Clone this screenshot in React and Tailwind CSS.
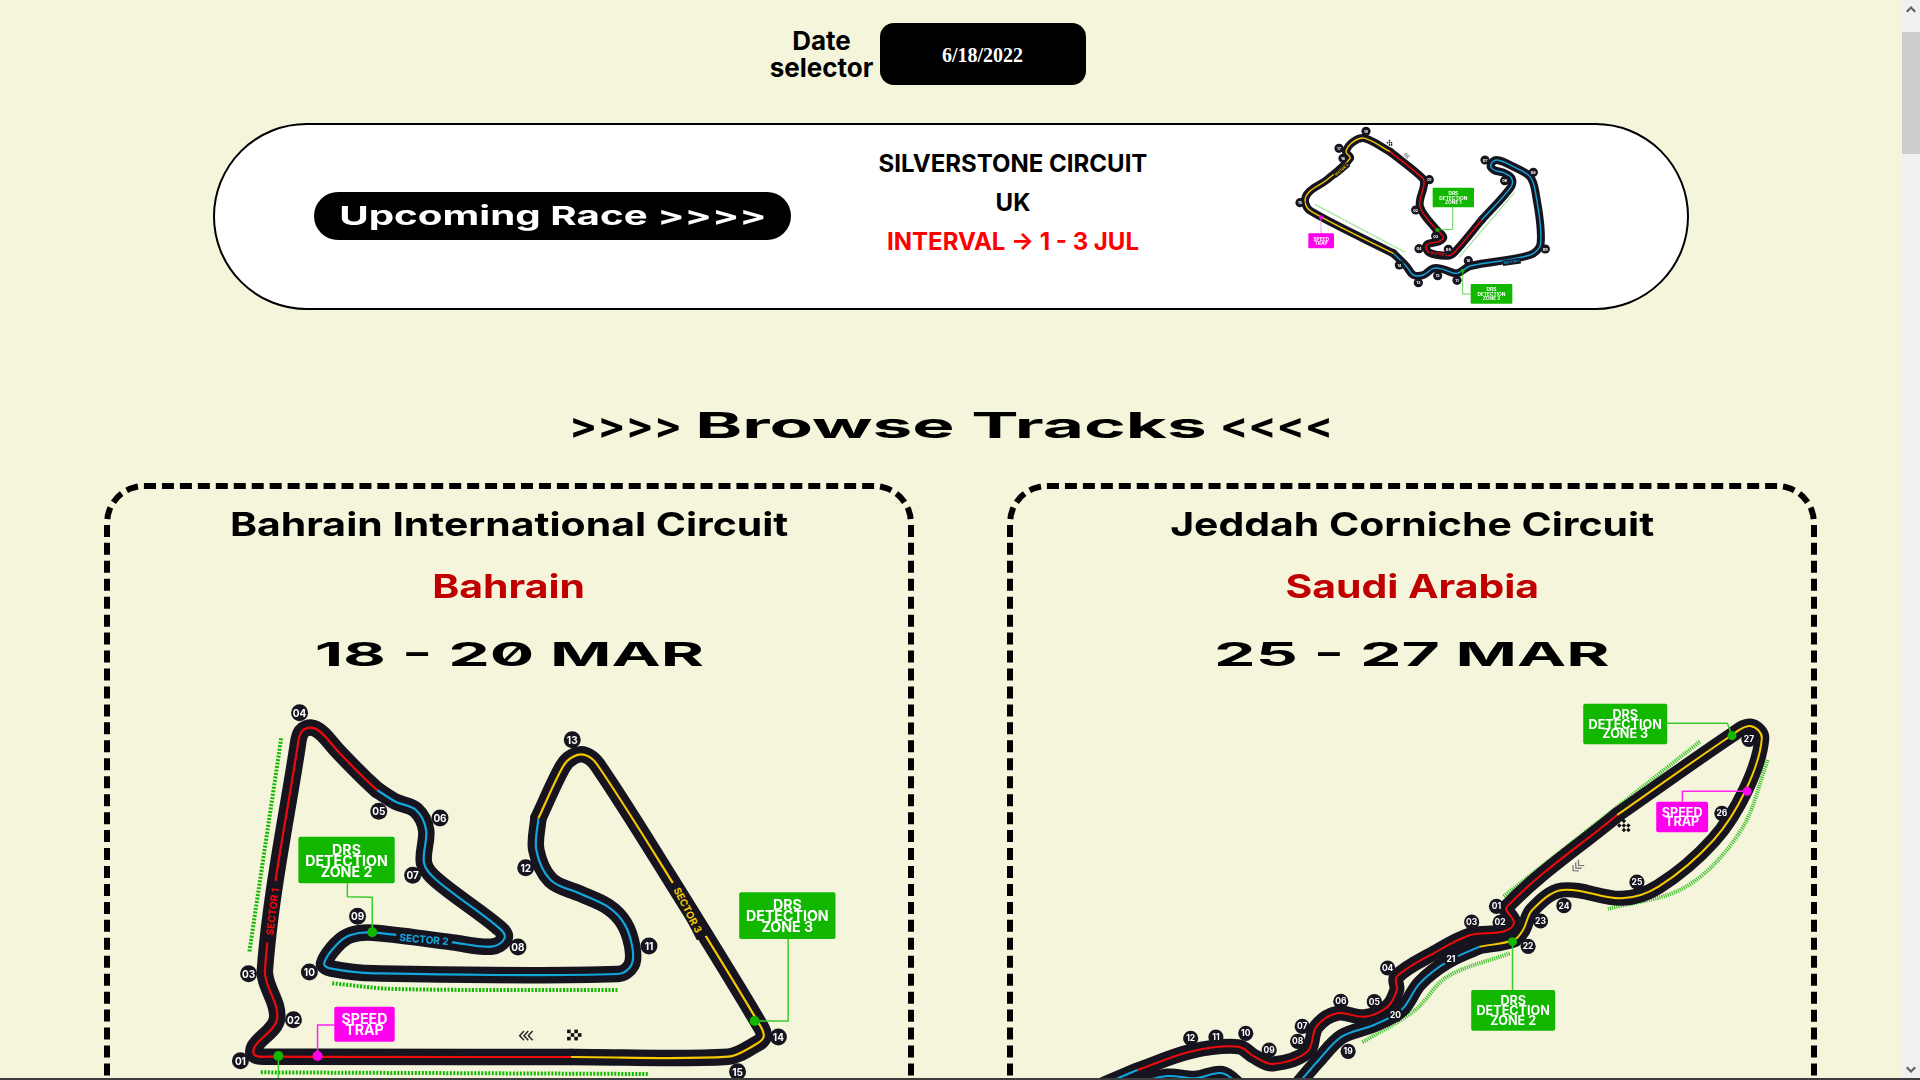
const GREEN = '#12b800'
const GREEN_LINE = '#3ccb2c'
const PINK = '#ff00ee'
const CASING = '#16151f'
const RED = '#ee0a0a'
const BLUE = '#12a5dc'
const YELLOW = '#f5c800'

// points are read off the reference crops, sx/sy turn them into page pixels
function smooth(pts) {
  const unit = (a, b) => {
    const dx = b[0] - a[0]
    const dy = b[1] - a[1]
    const len = Math.hypot(dx, dy) || 1
    return [dx / len, dy / len]
  }
  let d = `M${pts[0][0]} ${pts[0][1]}`
  for (let i = 0; i < pts.length - 1; i++) {
    const p0 = pts[i - 1] || pts[i]
    const p1 = pts[i]
    const p2 = pts[i + 1]
    const p3 = pts[i + 2] || p2
    const seg = Math.hypot(p2[0] - p1[0], p2[1] - p1[1]) / 3
    const t1 = unit(p0, p2)
    const t2 = unit(p1, p3)
    d += ` C${p1[0] + t1[0] * seg} ${p1[1] + t1[1] * seg} ${p2[0] - t2[0] * seg} ${p2[1] - t2[1] * seg} ${p2[0]} ${p2[1]}`
  }
  return d
}

function TrackMap({ map, width, height, viewBox, className }) {
  const { sx, sy, ox, oy } = map
  const P = ([x, y]) => [x / sx + ox, y / sy + oy]
  return (
    <svg width={width} height={height} viewBox={viewBox || `0 0 ${width} ${height}`} className={className}>
      {map.strips.map((s, i) => (
        <path key={i} d={smooth(s.map(P))} fill="none" stroke={GREEN} strokeOpacity={map.stripOpacity} strokeWidth={map.stripWidth} strokeDasharray={map.stripDash} />
      ))}
      {map.sectors.map((s, i) => (
        <path key={i} d={smooth(s.pts.map(P))} fill="none" stroke={CASING} strokeWidth={map.casing} strokeLinecap="round" strokeLinejoin="round" />
      ))}
      {map.sectors.map((s, i) => (
        <path key={i} d={smooth(s.pts.map(P))} fill="none" stroke={s.color} strokeWidth={map.core} />
      ))}
      {map.labels.map(([t, lx, ly, rot, color, size, w]) => {
        const [x, y] = P([lx, ly])
        return (
          <g key={t} transform={`translate(${x} ${y}) rotate(${rot})`}>
            <rect x={-w / 2} y={-size / 2 - 1} width={w} height={size + 2} fill={CASING} />
            <text textAnchor="middle" dominantBaseline="central" fill={color} fontSize={size} fontWeight="700">{t}</text>
          </g>
        )
      })}
      {map.leaders.map((l, i) => (
        <polyline key={i} points={l.pts.map(P).map(p => p.join(',')).join(' ')} fill="none" stroke={l.color} strokeWidth={map.leader} strokeLinejoin="round" />
      ))}
      {map.dots.map((d, i) => {
        const [x, y] = P(d)
        return <circle key={i} cx={x} cy={y} r={map.dot} fill={d[2]} />
      })}
      {map.marks.map((m, i) => {
        const [x, y] = P(m)
        const u = map.markSize
        if (m[2] === 'chevron') {
          return (
            <g key={i} transform={`translate(${x} ${y}) rotate(${m[3] || 0})`} fill="none" stroke={m[4] || '#222'} strokeWidth={u * 0.4}>
              {[-u * 1.2, 0, u * 1.2].map(o => (
                <polyline key={o} points={`${o + u * 0.6},${-u * 1.3} ${o - u * 0.6},0 ${o + u * 0.6},${u * 1.3}`} />
              ))}
            </g>
          )
        }
        return (
          <g key={i} transform={`translate(${x} ${y}) rotate(${m[3] || 0})`} fill="#111">
            {[0, 1, 2, 3, 4, 5, 6, 7, 8, 9, 10, 11].filter(n => (n % 4 + Math.floor(n / 4)) % 2 === 0).map(n => (
              <rect key={n} x={(n % 4 - 2) * u} y={(Math.floor(n / 4) - 1.5) * u} width={u} height={u} />
            ))}
          </g>
        )
      })}
      {map.badges.map(([label, bx, by]) => {
        const [x, y] = P([bx, by])
        return (
          <g key={label}>
            <circle cx={x} cy={y} r={map.badge} fill={CASING} />
            <text x={x} y={y} textAnchor="middle" dominantBaseline="central" fill="#fff" fontSize={map.badgeText} fontWeight="700">{label}</text>
          </g>
        )
      })}
      {map.boxes.map((b, i) => {
        const [x, y] = P([b.x, b.y])
        const w = b.w / sx
        const h = b.h / sy
        const top = y + h / 2 - ((b.lines.length - 1) * b.gap) / 2
        return (
          <g key={i}>
            <rect x={x} y={y} width={w} height={h} rx={map.boxRadius} fill={b.color} />
            {b.lines.map((t, n) => (
              <text key={t} x={x + w / 2} y={top + n * b.gap} textAnchor="middle" dominantBaseline="central" fill="#fff" fontSize={b.size} fontWeight="700">{t}</text>
            ))}
          </g>
        )
      })}
    </svg>
  )
}

const SILVERSTONE = {
  sx: 3, sy: 3, ox: 0, oy: 0,
  casing: 8, core: 1.4, stripWidth: 1.4, stripOpacity: 0.55, stripDash: '1 0.6', leader: 0.8, dot: 2, badge: 4.6, badgeText: 3.8, markSize: 1.5, boxRadius: 1,
  strips: [[[135, 283], [405, 427]], [[733, 248], [567, 442]]],
  sectors: [
    { color: BLUE, pts: [[635, 330], [722, 232], [725, 205], [700, 188], [672, 180], [662, 165], [680, 150], [730, 170], [780, 200], [797, 250], [812, 400], [780, 435], [600, 468], [560, 490], [520, 478], [490, 475], [460, 495], [430, 495], [410, 470], [370, 430]] },
    { color: YELLOW, pts: [[370, 430], [125, 305], [105, 275], [118, 245], [170, 210], [240, 145], [228, 125], [250, 95], [285, 85], [360, 125]] },
    { color: RED, pts: [[360, 125], [458, 205], [462, 225], [450, 290], [500, 360], [520, 382], [505, 395], [470, 405], [478, 428], [535, 437], [555, 425], [635, 330]] },
  ],
  labels: [
    ['SECTOR 1', 725, 456, -8, BLUE, 3.4, 18],
    ['SECTOR 2', 505, 432, 8, RED, 3.4, 18],
    ['SECTOR 3', 215, 180, -40, YELLOW, 3.4, 18],
  ],
  leaders: [
    { color: GREEN_LINE, pts: [[548, 292], [548, 358], [502, 360]] },
    { color: GREEN_LINE, pts: [[578, 482], [578, 552], [602, 552]] },
    { color: '#ff77f2', pts: [[153, 322], [153, 370]] },
  ],
  dots: [[502, 360, GREEN], [578, 482, GREEN], [153, 322, PINK]],
  marks: [[360, 100, 'checker', 45], [410, 137, 'chevron', 45, '#555']],
  badges: [['18', 288, 64], ['17', 207, 115], ['16', 219, 145], ['15', 90, 278], ['14', 388, 465], ['13', 445, 518], ['12', 503, 497], ['11', 561, 511], ['10', 595, 452], ['09', 826, 417], ['08', 790, 187], ['07', 645, 150], ['06', 704, 212], ['05', 535, 418], ['04', 447, 416], ['03', 497, 378], ['02', 437, 300], ['01', 478, 209]],
  boxes: [
    { x: 488, y: 233, w: 124, h: 59, color: GREEN, lines: ['DRS', 'DETECTION', 'ZONE 1'], size: 4.8, gap: 4.6 },
    { x: 602, y: 522, w: 125, h: 59, color: GREEN, lines: ['DRS', 'DETECTION', 'ZONE 2'], size: 4.8, gap: 4.6 },
    { x: 115, y: 370, w: 77, h: 45, color: PINK, lines: ['SPEED', 'TRAP'], size: 4.8, gap: 4.6 },
  ],
}

const BAHRAIN = {
  sx: 2.45, sy: 3, ox: 111, oy: 0,
  casing: 16.5, core: 2.2, stripWidth: 4, stripOpacity: 1, stripDash: '2 1.5', leader: 1.5, dot: 5, badge: 8.5, badgeText: 10, markSize: 3.6, boxRadius: 2,
  strips: [[[150, 145], [72, 785]], [[275, 880], [430, 897], [975, 900]], [[100, 1147], [1048, 1152]]],
  sectors: [
    { color: BLUE, pts: [[385, 300], [430, 335], [480, 360], [505, 420], [500, 520], [530, 570], [685, 715], [697, 745], [665, 770], [570, 757], [375, 728], [320, 735], [285, 765], [255, 820], [270, 835], [380, 850], [975, 852], [1008, 825], [1010, 770], [990, 700], [950, 650], [880, 610], [810, 570], [775, 480], [780, 385]] },
    { color: YELLOW, pts: [[780, 385], [840, 230], [865, 200], [895, 195], [925, 225], [1115, 590], [1320, 1000], [1332, 1040], [1310, 1065], [1245, 1100], [860, 1101]] },
    { color: RED, pts: [[860, 1101], [120, 1100], [85, 1095], [85, 1070], [140, 985], [110, 840], [190, 170], [200, 125], [225, 113], [250, 130], [290, 185], [350, 260], [385, 300]] },
  ],
  labels: [
    ['SECTOR 1', 127, 665, -83, RED, 10, 62],
    ['SECTOR 2', 500, 747, 5, BLUE, 10, 56],
    ['SECTOR 3', 1147, 660, 63, YELLOW, 10, 62],
  ],
  leaders: [
    { color: GREEN_LINE, pts: [[312, 580], [312, 620], [373, 622], [373, 727]] },
    { color: GREEN_LINE, pts: [[1392, 745], [1392, 993], [1310, 993]] },
    { color: '#ff22f0', pts: [[280, 1005], [239, 1005], [239, 1098]] },
    { color: GREEN_LINE, pts: [[143, 1098], [143, 1200]] },
  ],
  dots: [[373, 727, GREEN], [1310, 993, GREEN], [143, 1098, GREEN], [239, 1098, PINK]],
  marks: [[750, 1037, 'chevron', 0], [868, 1035, 'checker', 0]],
  badges: [['04', 195, 68], ['13', 863, 149], ['05', 389, 364], ['06', 539, 384], ['07', 472, 556], ['12', 749, 533], ['09', 337, 679], ['08', 730, 771], ['11', 1051, 768], ['10', 219, 846], ['03', 70, 851], ['02', 180, 989], ['14', 1368, 1041], ['01', 50, 1112], ['15', 1268, 1145]],
  boxes: [
    { x: 192, y: 440, w: 236, h: 140, color: GREEN, lines: ['DRS', 'DETECTION', 'ZONE 2'], size: 14.2, gap: 11 },
    { x: 1272, y: 607, w: 236, h: 140, color: GREEN, lines: ['DRS', 'DETECTION', 'ZONE 3'], size: 14.2, gap: 11 },
    { x: 280, y: 950, w: 148, h: 105, color: PINK, lines: ['SPEED', 'TRAP'], size: 14.2, gap: 11 },
  ],
}

const JEDDAH = {
  sx: 2.178, sy: 3, ox: 68, oy: 0,
  casing: 15, core: 2, stripWidth: 4, stripOpacity: 0.8, stripDash: '1.2 1', leader: 1.5, dot: 4.5, badge: 7.6, badgeText: 8.5, markSize: 3.2, boxRadius: 2,
  strips: [[[1350, 155], [1180, 340], [922, 620]], [[1498, 210], [1440, 420], [1320, 590], [1150, 657]], [[936, 790], [800, 860], [730, 960], [615, 1057]]],
  sectors: [
    { color: RED, pts: [[1170, 375], [930, 650], [945, 700], [920, 725], [850, 735], [770, 790], [690, 860], [690, 900], [670, 950], [620, 980], [560, 970], [515, 1010], [495, 1085], [420, 1122], [380, 1100], [345, 1070], [240, 1085], [125, 1140]] },
    { color: BLUE, pts: [[125, 1140], [40, 1190], [-40, 1240]] },
    { color: BLUE, pts: [[870, 770], [800, 815], [740, 880], [700, 960], [640, 1005], [570, 1040], [520, 1110], [470, 1190]] },
    { color: BLUE, pts: [[350, 1190], [310, 1150], [250, 1165], [190, 1158], [110, 1185]] },
    { color: YELLOW, pts: [[870, 770], [945, 750], [965, 720], [985, 660], [1050, 600], [1180, 625], [1260, 590], [1380, 450], [1450, 300], [1485, 145], [1460, 108], [1420, 135], [1170, 375]] },
  ],
  labels: [],
  leaders: [
    { color: GREEN_LINE, pts: [[1278, 100], [1410, 100], [1420, 137]] },
    { color: GREEN_LINE, pts: [[942, 755], [942, 900]] },
    { color: '#ff22f0', pts: [[1453, 304], [1312, 304], [1312, 335]] },
  ],
  dots: [[1420, 137, GREEN], [942, 755, GREEN], [1453, 304, PINK]],
  marks: [[1187, 410, 'checker', 45], [1083, 530, 'chevron', -45, '#777']],
  badges: [['27', 1457, 148], ['26', 1398, 370], ['25', 1213, 576], ['24', 1054, 647], ['23', 1003, 693], ['22', 976, 769], ['01', 907, 649], ['02', 915, 697], ['03', 853, 696], ['21', 808, 807], ['04', 670, 834], ['05', 641, 935], ['06', 568, 934], ['20', 687, 974], ['07', 484, 1009], ['08', 474, 1054], ['09', 412, 1080], ['10', 361, 1030], ['11', 296, 1041], ['12', 241, 1045], ['19', 584, 1084]],
  boxes: [
    { x: 1096, y: 41, w: 183, h: 122, color: GREEN, lines: ['DRS', 'DETECTION', 'ZONE 3'], size: 12.6, gap: 9.8 },
    { x: 852, y: 900, w: 183, h: 122, color: GREEN, lines: ['DRS', 'DETECTION', 'ZONE 2'], size: 12.6, gap: 9.8 },
    { x: 1255, y: 335, w: 113, h: 92, color: PINK, lines: ['SPEED', 'TRAP'], size: 12.6, gap: 9.8 },
  ],
}

function TrackCard({ name, country, dates, map }) {
  return (
    <article className="border-[6px] border-dashed border-black rounded-[40px] pt-[13px] flex flex-col items-center h-[760px]">
      <h3 className="text-[33px] leading-[44px] font-bold text-black scale-x-[1.24] whitespace-nowrap">{name}</h3>
      <p className="mt-[18px] text-[33px] leading-[44px] font-bold text-[#c00000] scale-x-[1.24] whitespace-nowrap">{country}</p>
      <p className="mt-[24px] text-[33px] leading-[44px] font-bold text-black slashed-zero scale-x-[2] whitespace-nowrap">{dates}</p>
      <TrackMap map={map} width={800} height={390} className="mt-[14px] shrink-0 blur-[0.2px]" />
    </article>
  )
}

function Scrollbar() {
  return (
    <aside className="w-[18px] shrink-0 bg-[#f0f0f0] flex flex-col items-center">
      <svg width="18" height="17" viewBox="0 0 18 17"><path d="M9 6 L14 11 L12.5 12.5 L9 9 L5.5 12.5 L4 11 Z" fill="#606060" /></svg>
      <div className="mt-[15px] w-full h-[122px] bg-[#cdcdcd]" />
      <svg width="18" height="17" viewBox="0 0 18 17" className="mt-auto"><path d="M9 12 L14 7 L12.5 5.5 L9 9 L5.5 5.5 L4 7 Z" fill="#606060" /></svg>
    </aside>
  )
}

export default function App() {
  return (
    <div className="h-[1080px] w-[1920px] flex flex-col overflow-hidden bg-[#f5f5dc] font-['Inter','Liberation_Sans',sans-serif] text-black">
      <div className="flex flex-1 min-h-0">
        <main className="flex-1 min-w-0 overflow-hidden">
          {/* Date picker */}
          <div className="flex justify-center items-center gap-[6px] pt-[23px] pr-[47px]">
            <div className="w-[104px] text-center text-[26px] leading-[27px] font-bold">Date selector</div>
            <button className="w-[206px] h-[62px] rounded-[14px] bg-black text-white font-['Liberation_Serif',serif] font-bold text-[20px] pt-[2px]">6/18/2022</button>
          </div>

          {/* Upcoming race banner */}
          <section className="mt-[38px] ml-[213px] w-[1476px] h-[187px] border-2 border-black rounded-full bg-white flex items-center pl-[99px]">
            <div className="w-[477px] h-[48px] mb-[2px] shrink-0 rounded-full bg-black text-white flex items-center justify-center font-bold text-[26px]">
              <span className="scale-x-[1.55] whitespace-nowrap">Upcoming Race &gt;&gt;&gt;&gt;</span>
            </div>
            <div className="w-[444px] mb-[28px] shrink-0 text-center text-[24px] leading-[39px] font-bold">
              <div>SILVERSTONE CIRCUIT</div>
              <div>UK</div>
              <div className="text-[#ff0000]">INTERVAL → 1 - 3 JUL</div>
            </div>
            <TrackMap map={SILVERSTONE} width={350} height={183} viewBox="0 15 350 183" className="ml-[35px] blur-[0.4px]" />
          </section>

          {/* Track list */}
          <h2 className="mt-[92px] h-[46px] flex items-center justify-center text-[35px] font-bold whitespace-nowrap">
            <span className="scale-x-[1.19]">&gt;&gt;&gt;&gt;</span>
            <span className="mx-[23px] w-[510px] text-center"><span className="inline-block scale-x-[2.03]">Browse Tracks</span></span>
            <span className="scale-x-[1.19]">&lt;&lt;&lt;&lt;</span>
          </h2>
          <div className="mt-[35px] ml-[104px] grid grid-cols-[810px_810px] gap-x-[93px]">
            <TrackCard name="Bahrain International Circuit" country="Bahrain" dates="18 - 20 MAR" map={BAHRAIN} />
            <TrackCard name="Jeddah Corniche Circuit" country="Saudi Arabia" dates="25 - 27 MAR" map={JEDDAH} />
          </div>
        </main>
        <Scrollbar />
      </div>
      <div className="h-[2px] shrink-0 bg-[#3c3c3c]" />
    </div>
  )
}
